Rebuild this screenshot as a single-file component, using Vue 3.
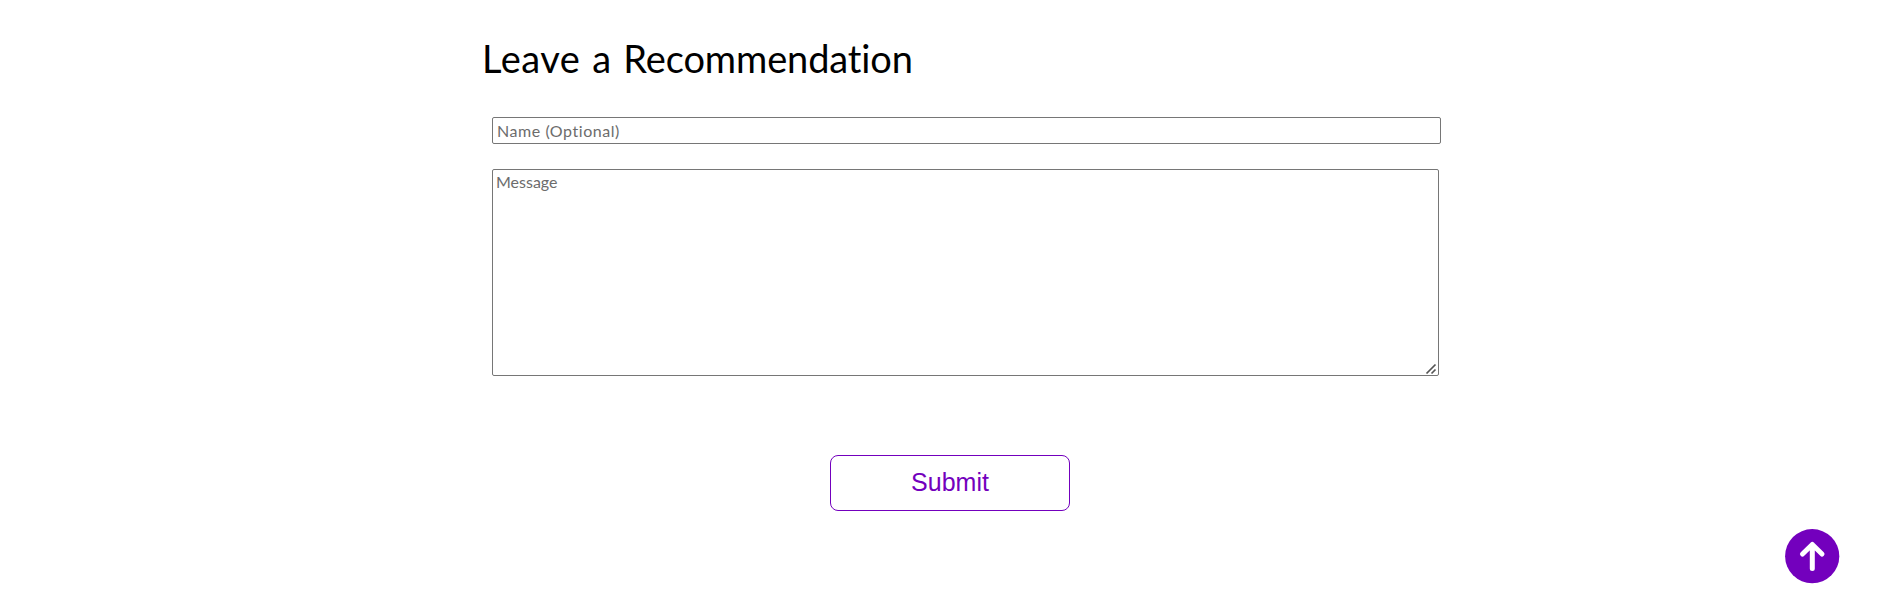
<script setup>
import { ref } from 'vue'

const name = ref('')
const message = ref('')

function submit() {
  name.value = ''
  message.value = ''
}
</script>

<template>
  <main class="page">
    <form class="form" @submit.prevent="submit">
      <h2 class="title">Leave a <span class="word">Recommendation</span></h2>
      <input v-model="name" class="name" type="text" placeholder="Name (Optional)" />
      <div class="field">
        <textarea v-model="message" class="message" placeholder="Message"></textarea>
        <svg class="grip" width="12" height="12" viewBox="0 0 12 12">
          <path d="M1.5 10.5L10.5 1.5M6.5 10.5L10.5 6.5" fill="none" stroke="#555" stroke-width="1.7" />
        </svg>
      </div>
      <button class="submit" type="submit">Submit</button>
    </form>
    <a class="top" href="#" aria-label="Back to top">
      <svg width="55" height="55" viewBox="0 0 55 55">
        <circle cx="27.2" cy="27.2" r="27.1" fill="#7300bd" />
        <path d="M27.3 39.5V15.5M17.5 25L27.3 15.5L37 25" fill="none" stroke="#fff" stroke-width="5" stroke-linecap="round" stroke-linejoin="round" />
      </svg>
    </a>
  </main>
</template>

<style>
html,
body {
  background: #fff;
  overflow: hidden;
}
</style>

<style scoped>
.page {
  position: relative;
  box-sizing: border-box;
  height: 602px;
  padding: 34px 0 0 482px;
}
.form {
  display: flex;
  flex-direction: column;
  align-items: flex-start;
  width: 960px;
}
.title {
  margin: 0;
  height: 48px;
  font: 400 38px/48px "Trebuchet MS", Lato, sans-serif;
  letter-spacing: 0.5px;
  word-spacing: 1.6px;
  color: #000;
  white-space: nowrap;
}
.word {
  letter-spacing: -0.12px;
}
.name,
.message {
  box-sizing: border-box;
  border: 1px solid #767676;
  border-radius: 2px;
  background: #fff;
  font: 400 16px/19px "Trebuchet MS", Lato, sans-serif;
  outline: none;
}
.name {
  width: 949px;
  height: 27px;
  margin: 35px 0 0 10px;
  padding: 1px 4px;
  letter-spacing: 0.55px;
}
.field {
  position: relative;
  width: 947px;
  height: 207px;
  margin: 25px 0 0 10px;
}
.message {
  display: block;
  width: 100%;
  height: 100%;
  padding: 2px 3px;
  letter-spacing: 0;
  resize: none;
}
.grip {
  position: absolute;
  right: 2px;
  bottom: 1px;
  pointer-events: none;
}
.name::placeholder,
.message::placeholder {
  color: #6c6c6c;
}
.submit {
  box-sizing: border-box;
  width: 240px;
  height: 56px;
  margin: 79px 0 0 348px;
  padding: 0 0 2px;
  border: 1px solid #7300bd;
  border-radius: 8px;
  background: #fff;
  color: #7300bd;
  font: 400 25px/30px "Liberation Sans", Arial, sans-serif;
}
.top {
  position: absolute;
  left: 1785px;
  top: 529px;
  width: 55px;
  height: 55px;
}
.top svg {
  display: block;
}
</style>
